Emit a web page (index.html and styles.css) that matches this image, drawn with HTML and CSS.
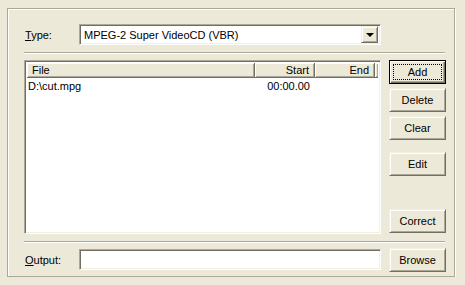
FILE: index.html
```html
<!DOCTYPE html>
<html lang="en">
<head>
<meta charset="UTF-8">
<title>Join Files</title>
<link rel="stylesheet" href="styles.css">
</head>
<body>
  <div class="frame">
    <div class="type-row">
      <label class="label"><u>T</u>ype:</label>
      <div class="combo sunken">
        <span class="combo-text">MPEG-2 Super VideoCD (VBR)</span>
        <span class="combo-btn"><span class="arrow"></span></span>
      </div>
    </div>
    <div class="sep"></div>
    <div class="main">
      <div class="list sunken">
        <div class="list-head">
          <div class="col col-file">File</div>
          <div class="col col-start">Start</div>
          <div class="col col-end">End</div>
          <div class="col col-rest"></div>
        </div>
        <div class="list-row">
          <div class="cell col-file">D:\cut.mpg</div>
          <div class="cell col-start">00:00.00</div>
          <div class="cell col-end"></div>
        </div>
      </div>
      <div class="buttons">
        <button class="btn default"><span class="focus">Add</span></button>
        <button class="btn">Delete</button>
        <button class="btn">Clear</button>
        <button class="btn edit">Edit</button>
        <button class="btn correct">Correct</button>
      </div>
    </div>
    <div class="sep"></div>
    <div class="out-row">
      <label class="label"><u>O</u>utput:</label>
      <div class="field sunken"></div>
      <button class="btn">Browse</button>
    </div>
  </div>
</body>
</html>
```

FILE: styles.css
```css
body {
  margin: 0;
  background-color: #ece9d8;
  font-family: "Liberation Sans", Arial, sans-serif;
  font-size: 11px;
  color: #000;
}

.frame {
  margin: 8px 0 0 7px;
  width: 447px;
  height: 267px;
  border: 1px solid #aca899;
  box-shadow: inset 1px 1px #fff, 1px 1px #fff;
  padding: 15px 0 0 16px;
  box-sizing: border-box;
  height: 269px;
  width: 448px;
}

.sunken {
  border: 1px solid;
  border-color: #aca899 #fff #fff #aca899;
  box-shadow: inset 1px 1px #716f64, inset -1px -1px #f1efe2;
  background-color: #fff;
  box-sizing: border-box;
}

.type-row,
.out-row {
  display: flex;
  align-items: center;
}

.type-row {
  height: 21px;
}

.label {
  width: 55px;
  padding-left: 1px;
  box-sizing: border-box;
}

.combo {
  width: 302px;
  height: 21px;
  display: flex;
  align-items: center;
  justify-content: space-between;
  padding: 2px;
}

.combo-text {
  padding-left: 2px;
}

.combo-btn {
  width: 17px;
  height: 17px;
  box-sizing: border-box;
  background-color: #ece9d8;
  border: 1px solid;
  border-color: #f1efe2 #716f64 #716f64 #f1efe2;
  box-shadow: inset 1px 1px #fff, inset -1px -1px #aca899;
  display: flex;
  align-items: center;
  justify-content: center;
}

.arrow {
  width: 0;
  height: 0;
  border-left: 4px solid transparent;
  border-right: 4px solid transparent;
  border-top: 4px solid #000;
  margin-top: 1px;
}

.sep {
  width: 421px;
  border-top: 1px solid #aca899;
  border-bottom: 1px solid #fff;
  margin-top: 7px;
}

.main {
  display: flex;
  gap: 8px;
  margin-top: 6px;
}

.list {
  width: 357px;
  height: 174px;
  padding: 2px;
}

.list-head {
  display: flex;
  height: 15px;
  background-color: #ece9d8;
}

.list-head .col {
  box-sizing: border-box;
  height: 15px;
  line-height: 14px;
  border-right: 1px solid #716f64;
  border-bottom: 1px solid #716f64;
  box-shadow: inset 1px 1px #fff, inset -1px -1px #aca899;
  padding: 0 5px;
}

.list-head .col-rest {
  flex: 1;
  border-right: none;
  padding: 0;
}

.col-file {
  width: 228px;
  box-sizing: border-box;
}

.col-start,
.col-end {
  width: 60px;
  box-sizing: border-box;
  text-align: right;
}

.list-row {
  display: flex;
  height: 17px;
  line-height: 17px;
}

.list-row .cell {
  padding: 0 5px 0 1px;
}

.list-row .col-start {
  padding-right: 5px;
}

.buttons {
  width: 57px;
  display: flex;
  flex-direction: column;
  gap: 4px;
}

.btn {
  font-family: "Liberation Sans", Arial, sans-serif;
  font-size: 11px;
  color: #000;
  width: 57px;
  height: 24px;
  padding: 0;
  background-color: #ece9d8;
  border: 1px solid;
  border-color: #f1efe2 #716f64 #716f64 #f1efe2;
  box-shadow: inset 1px 1px #fff, inset -1px -1px #aca899;
  box-sizing: border-box;
}

.btn.default {
  border-color: #000;
  box-shadow: inset 1px 1px #fff, inset -1px -1px #716f64, inset -2px -2px #aca899;
  display: flex;
  align-items: center;
  justify-content: center;
  padding: 3px;
}

.focus {
  display: block;
  width: 100%;
  height: 100%;
  border: 1px dotted #000;
  box-sizing: border-box;
  line-height: 14px;
}

.btn.edit {
  margin-top: 8px;
}

.btn.correct {
  margin-top: auto;
  margin-bottom: 1px;
}

.out-row {
  height: 25px;
  margin-top: 4px;
}

.field {
  width: 302px;
  height: 21px;
  margin-right: 8px;
}
```
